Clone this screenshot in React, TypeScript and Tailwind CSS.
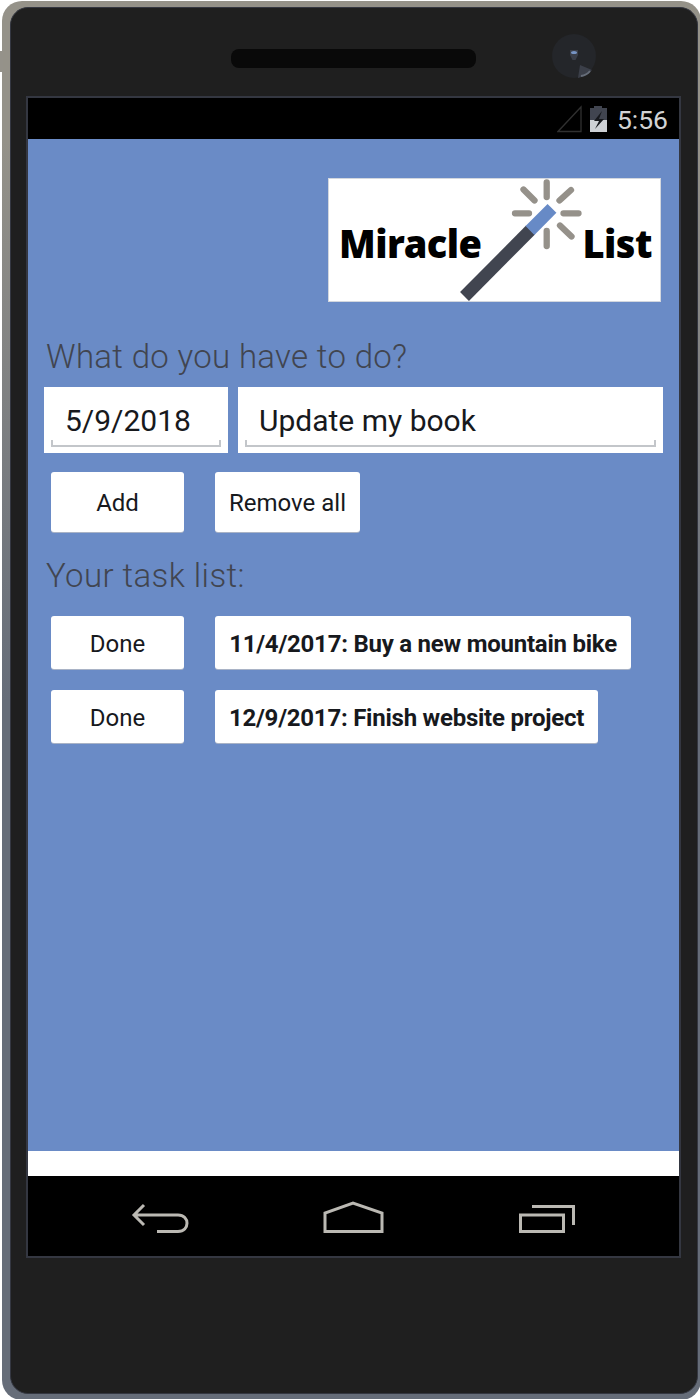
function Logo() {
  return (
    <div className="relative ml-[300px] mt-[39px] h-[124px] w-[333px] bg-white outline outline-1 -outline-offset-1 outline-[#d3d7de] text-black font-black font-['Noto_Sans','Open_Sans',sans-serif]">
      <svg className="absolute inset-0" width="333" height="124" viewBox="0 0 333 124" fill="none">
        <path d="M202.500 52L136.500 118.500" stroke="#414550" strokeWidth="12.500" />
        <path d="M202 52.500L224 30.400" stroke="#678ac6" strokeWidth="12.500" />
        <g stroke="#95918a" strokeWidth="6.300" strokeLinecap="round">
          <path d="M218.700 4.500V19M218.700 53V68M187 35.300H201M235.500 35.300H250.500M195.500 11.500L206.500 22.500M243 12L231.500 22.500M232 47.500L243.500 58.500" />
        </g>
      </svg>
      <div className="relative flex h-full items-center justify-between pl-[11px] pr-[9px] pt-[6px] text-[38px] leading-none whitespace-nowrap">
        <span className="tracking-[-0.5px]">Miracle</span>
        <span className="tracking-[-0.5px]">List</span>
      </div>
    </div>
  );
}

function Entry({ value, size }: { value: string; size: string }) {
  return (
    <div className={`flex h-[66px] flex-col bg-white px-[7px] ${size}`}>
      <div className="flex h-[53px] items-end pl-[14px] text-[30px] leading-[38px] text-[#17191d] whitespace-nowrap">{value}</div>
      <div className="h-[7px] border-2 border-t-0 border-[#c3c6ca]" />
    </div>
  );
}

function Button({ children, className }: { children: string; className: string }) {
  return (
    <button className={`flex shrink-0 items-center justify-center rounded-[3px] bg-white pt-[2px] text-[24px] leading-none text-[#17191d] whitespace-nowrap shadow-[0_1px_0_#a9b3c6] ${className}`}>
      {children}
    </button>
  );
}

const tasks = [
  { label: "11/4/2017: Buy a new mountain bike", width: "w-[416px]" },
  { label: "12/9/2017: Finish website project", width: "w-[383px]" },
];

export default function App() {
  return (
    <div className="relative h-[1399px] w-[700px] overflow-hidden bg-white pl-[2px] pt-[1px] font-[Roboto,sans-serif]">
      <div className="absolute left-0 top-[51px] h-[21px] w-[3px] bg-[#95928a]" />
      <div className="h-[1399px] w-[699px] rounded-[20px] bg-linear-to-b from-[#959289] from-10% to-[#666d79] to-50% pl-2 pt-[6px]">
        <div className="h-[1387px] w-[688px] rounded-[18px] border border-[#343741] bg-[#1f1f1f] pl-[15px]">
          <div className="flex h-[88px] items-start">
            <div className="ml-[205px] mt-[41px] h-[19px] w-[245px] rounded-[8px] bg-[#090909]" />
            <svg className="ml-[75px] mt-[25px]" width="46" height="46" viewBox="0 0 46 46">
              <circle cx="23" cy="23" r="22" fill="#24262a" />
              <path d="M19 17H27V22L24.500 27H21.500L19 22Z" fill="#3b3f49" />
              <ellipse cx="23" cy="19.500" rx="3" ry="1.600" fill="#7794c4" />
              <path d="M29 32L41 37Q36 43 27 45Z" fill="#3b3f49" />
              <path d="M39 38Q36 42 30 43" stroke="#666d79" strokeWidth="2" fill="none" />
            </svg>
          </div>
          <div className="w-[655px] border-2 border-[#343741] bg-black">
            <div className="flex h-[41px] items-center justify-end pr-[11px] text-[26.500px] leading-none text-[#d2d3d4]">
              <svg width="52" height="30" viewBox="0 0 52 30">
                <path d="M1 27.500H24V3Z" fill="none" stroke="#303030" strokeWidth="1.300" />
                <path d="M33 4H37V2H45V4H50V16H33Z" fill="#414550" />
                <path d="M33 16H50V28H33Z" fill="#ced1d5" />
                <path d="M45 7L37 17H42L38 25L47 15H42Z" fill="#17191d" />
              </svg>
              <span className="ml-2 pt-[4px]">5:56</span>
            </div>
            <main className="h-[1012px] bg-[#6a8bc6] overflow-hidden">
              <Logo />
              <h1 className="mt-[35px] ml-[18px] h-10 text-[33px] font-light leading-10 tracking-[0.32px] text-[#414550] whitespace-nowrap">What do you have to do?</h1>
              <div className="mt-[10px] ml-4 flex gap-[10px]">
                <Entry value="5/9/2018" size="w-[184px]" />
                <Entry value="Update my book" size="w-[425px]" />
              </div>
              <div className="mt-[19px] ml-[23px] flex gap-[31px]">
                <Button className="h-[60px] w-[133px]">Add</Button>
                <Button className="h-[60px] w-[145px]">Remove all</Button>
              </div>
              <h2 className="mt-6 ml-[18px] h-10 text-[33px] font-light leading-10 tracking-[0.4px] text-[#414550] whitespace-nowrap">Your task list:</h2>
              <div className="mt-5 ml-[23px] flex flex-col gap-[21px]">
                {tasks.map((task) => (
                  <div key={task.label} className="flex gap-[31px]">
                    <Button className="h-[53px] w-[133px]">Done</Button>
                    <Button className={`h-[53px] font-bold tracking-[-0.240px] ${task.width}`}>{task.label}</Button>
                  </div>
                ))}
              </div>
            </main>
            <div className="h-[25px] bg-white" />
            <nav className="h-[80px]">
              <svg width="651" height="80" viewBox="1 -1 651 80" fill="none" stroke="#bbb9b3" strokeWidth="3">
                <path d="M117 28L107 38L117 48M107 38H151C163 38 163 54.500 151 54.500H130" />
                <path d="M298 54.500V36L326 26L355 36V54.500Z" />
                <path d="M493.500 38H536.500V54.500H493.500ZM505 29.500H546.500V48" />
              </svg>
            </nav>
          </div>
        </div>
      </div>
    </div>
  );
}
